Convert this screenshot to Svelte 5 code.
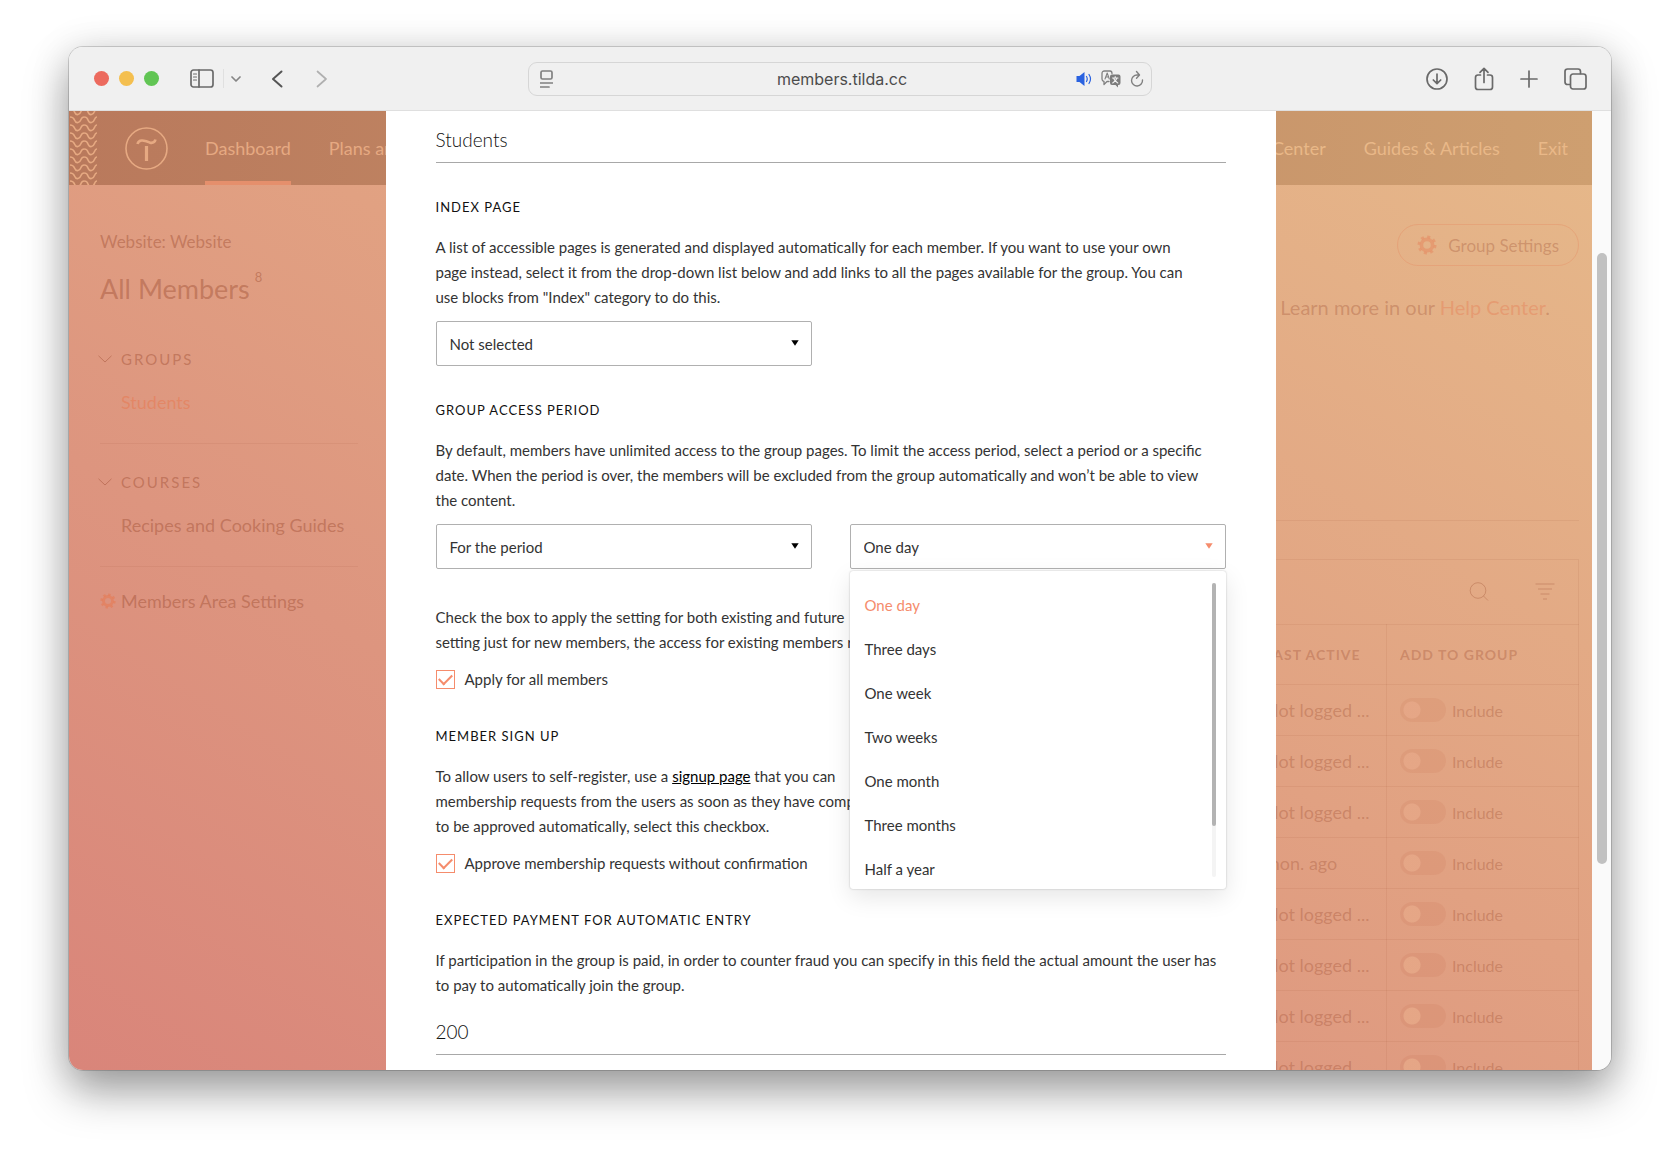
<script lang="ts">
  interface Row {
    id: number;
    lastActive: string;
  }

  const periods = [
    'One day',
    'Three days',
    'One week',
    'Two weeks',
    'One month',
    'Three months',
    'Half a year',
    'One year'
  ];

  const rows: Row[] = [
    'Not logged ...',
    'Not logged ...',
    'Not logged ...',
    'mon. ago',
    'Not logged ...',
    'Not logged ...',
    'Not logged ...',
    'Not logged ...'
  ].map((lastActive, id) => ({ id, lastActive }));

  const waves = Array.from({ length: 11 }, (_, i) => i * 8 - 4);

  let groupName = $state('Students');
  let indexPage = $state('Not selected');
  let access = $state('For the period');
  let period = $state('One day');
  let periodOpen = $state(true);
  let applyAll = $state(true);
  let autoApprove = $state(true);
  let payment = $state('200');

  function choose(p: string) {
    period = p;
    periodOpen = false;
  }
</script>

{#snippet gear()}
  <svg class="gear" viewBox="0 0 20 20" aria-hidden="true">
    <circle cx="10" cy="10" r="5.6" stroke-width="3.6" />
    <circle cx="10" cy="10" r="8.2" stroke-width="2.6" stroke-dasharray="3 3.44" />
  </svg>
{/snippet}

{#snippet chevron()}
  <svg class="chevron" viewBox="0 0 14 8" aria-hidden="true"><path d="M.5.8 7 7 13.500.8" /></svg>
{/snippet}

{#snippet arrow()}
  <svg class="arrow" viewBox="0 0 8 6" aria-hidden="true"><path d="M.3.3h7.400L4 5.700z" /></svg>
{/snippet}

<div class="desktop">
  <div class="window">
    <header class="toolbar">
      <div class="tools left">
        <div class="lights">
          <button class="light red" aria-label="Close"></button>
          <button class="light yellow" aria-label="Minimize"></button>
          <button class="light green" aria-label="Zoom"></button>
        </div>
        <button class="tool sidebar-btn" aria-label="Show sidebar">
          <svg width="24" height="19" viewBox="0 0 24 19">
            <rect x="1" y="1" width="22" height="17" rx="2.500" />
            <path d="M9 1v17" />
            <path d="M3.500 5h3M3.500 8h3M3.500 11h3" stroke-width="1.200" />
          </svg>
        </button>
        <button class="tool small" aria-label="Tab groups">
          <svg width="10" height="6" viewBox="0 0 10 6"><path d="M1 1l4 4 4-4" /></svg>
        </button>
        <button class="tool back" aria-label="Back">
          <svg width="12" height="18" viewBox="0 0 12 18"><path d="M10.500 1.500 2 9l8.500 7.500" stroke-width="2" /></svg>
        </button>
        <button class="tool forward" aria-label="Forward">
          <svg width="12" height="18" viewBox="0 0 12 18"><path d="M1.500 1.500 10 9l-8.500 7.500" /></svg>
        </button>
      </div>

      <div class="address">
        <button class="tool" aria-label="Reader">
          <svg width="13" height="18" viewBox="0 0 13 18">
            <rect x="1" y="1" width="11" height="8" rx="1.500" />
            <path d="M.5 13h12M.5 17h8.500" />
          </svg>
        </button>
        <input type="text" value="members.tilda.cc" aria-label="Address" />
        <div class="address-icons">
          <button class="tool" aria-label="Mute tab">
            <svg width="16" height="16" viewBox="0 0 16 16">
              <path class="speaker" d="M.5 5h3L8.500 1v14l-5-4h-3z" />
              <path class="sound" d="M10.500 5.500q1.500 2.500 0 5M13 3.500q3 4.500 0 9" />
            </svg>
          </button>
          <button class="tool" aria-label="Translate">
            <svg width="20" height="18" viewBox="0 0 20 18">
              <path d="M8 11.500H6L3 14.500v-3Q1 11 1 9V3.500Q1 1 3.500 1H9q2 0 2 2.500" stroke-width="1.300" />
              <path d="M4 9l2.200-6L8.300 9M4.700 7h3" stroke-width="1.100" />
              <path class="solid" d="M11 4.500h6.500q2 0 2 2V13q0 2-2 2H17v2.500L14.500 15H11q-2 0-2-2V6.500q0-2 2-2z" />
              <path class="light-stroke" d="M11.500 8h5.500M14.200 6.500V8M16 8q-1 3-4.300 5M12.500 8q1 3.200 4.300 5" />
            </svg>
          </button>
          <button class="tool" aria-label="Reload">
            <svg width="14" height="18" viewBox="0 0 14 18">
              <path d="M12.500 10A5.500 5.500 0 1 1 7 5h2M6.500 1.500 9.500 5 6.500 8.200" stroke-width="1.400" />
            </svg>
          </button>
        </div>
      </div>

      <div class="tools right">
        <button class="tool" aria-label="Downloads">
          <svg width="22" height="22" viewBox="0 0 22 22">
            <circle cx="11" cy="11" r="10" /><path d="M11 6v9.500M7.300 12l3.700 3.700 3.700-3.700" />
          </svg>
        </button>
        <button class="tool" aria-label="Share">
          <svg width="20" height="24" viewBox="0 0 20 24">
            <path d="M6.500 8H4Q1.500 8 1.500 10.500v9.500Q1.500 22.500 4 22.500h12q2.500 0 2.500-2.500v-9.500Q18.500 8 16 8h-2.500M10 15.500V1.500M6 5.300l4-4 4 4" />
          </svg>
        </button>
        <button class="tool" aria-label="New tab">
          <svg width="18" height="18" viewBox="0 0 18 18"><path d="M9 1v16M1 9h16" /></svg>
        </button>
        <button class="tool" aria-label="Tab overview">
          <svg width="24" height="22" viewBox="0 0 24 22">
            <path d="M6 16.500H3.500Q1 16.500 1 14V3.500Q1 1 3.500 1H14q2.500 0 2.500 2.500v2" />
            <rect x="6.500" y="6" width="15.500" height="15" rx="2.500" />
          </svg>
        </button>
      </div>
    </header>

    <div class="viewport">
      <div class="page">
        <div class="site-header">
          <svg class="waves" width="28" height="74" viewBox="0 0 28 74" aria-hidden="true">
            {#each waves as y}
              <path d="M1 {y + 2}q3.400 0 4.500 3t3.500 2.500q2-.3 3-3t3.500-2.500q2.500 0 3.500 3t3.500 2.500q2-.3 3-3t2.500-2.500" />
            {/each}
          </svg>
          <a class="logo" href="#home" aria-label="Tilda">
            <svg width="43" height="43" viewBox="0 0 43 43">
              <circle cx="21.500" cy="21.500" r="20.500" stroke-width="1.600" />
              <path d="M12.500 17q1-4 5-3.500t7.500 2.200q4.500.8 5.500-3.200" stroke-width="2.600" />
              <path d="M21.500 19v15" stroke-width="3.200" />
            </svg>
          </a>
          <nav class="main-nav">
            <a class="active" href="#dashboard">Dashboard</a>
            <a href="#plans">Plans and Billing</a>
          </nav>
          <nav class="side-nav">
            <a href="#help">Help Center</a>
            <a href="#guides">Guides &amp; Articles</a>
            <a href="#exit">Exit</a>
          </nav>
        </div>

        <div class="columns">
          <aside>
            <p class="site">Website: Website</p>
            <h1>All Members<sup>8</sup></h1>
            <section>
              <h2>{@render chevron()}GROUPS</h2>
              <a class="current" href="#students">Students</a>
            </section>
            <section>
              <h2>{@render chevron()}COURSES</h2>
              <a href="#recipes">Recipes and Cooking Guides</a>
            </section>
            <a class="settings" href="#settings">{@render gear()}Members Area Settings</a>
          </aside>

          <main>
            <button class="group-settings">{@render gear()}Group Settings</button>
            <p class="learn">. Learn more in our <a href="#help-center">Help Center</a>.</p>
            <div class="members">
              <div class="members-bar">
                <button aria-label="Search">
                  <svg width="20" height="20" viewBox="0 0 20 20"><circle cx="9" cy="8.500" r="7.800" /><path d="M14.500 14l4.500 4.500" /></svg>
                </button>
                <button aria-label="Filter">
                  <svg width="20" height="20" viewBox="0 0 20 20"><path d="M.5 2h19M3 7h14M5.500 12h9M8 17h4" /></svg>
                </button>
              </div>
              <table>
                <thead>
                  <tr><th>LAST ACTIVE</th><th>ADD TO GROUP</th></tr>
                </thead>
                <tbody>
                  {#each rows as row (row.id)}
                    <tr>
                      <td>{row.lastActive}</td>
                      <td>
                        <label class="toggle"><input type="checkbox" />Include</label>
                      </td>
                    </tr>
                  {/each}
                </tbody>
              </table>
            </div>
          </main>
        </div>

        <div class="modal" role="dialog" aria-label="Group Settings">
          <input class="line-input" type="text" bind:value={groupName} aria-label="Group name" />

          <h3 id="index-page">INDEX PAGE</h3>
          <p>
            A list of accessible pages is generated and displayed automatically for each member. If you want to use your own<br />
            page instead, select it from the drop-down list below and add links to all the pages available for the group. You can<br />
            use blocks from "Index" category to do this.
          </p>
          <div class="fields">
            <div class="select">
              <select bind:value={indexPage} aria-labelledby="index-page">
                <option>Not selected</option>
              </select>
              {@render arrow()}
            </div>
          </div>

          <h3 id="access-period">GROUP ACCESS PERIOD</h3>
          <p>
            By default, members have unlimited access to the group pages. To limit the access period, select a period or a specific<br />
            date. When the period is over, the members will be excluded from the group automatically and won’t be able to view<br />
            the content.
          </p>
          <div class="fields">
            <div class="select">
              <select bind:value={access} aria-labelledby="access-period">
                <option>For the period</option>
              </select>
              {@render arrow()}
            </div>
            <div class="select" class:open={periodOpen}>
              <select bind:value={period} aria-label="Period">
                {#each periods as p}
                  <option>{p}</option>
                {/each}
              </select>
              {@render arrow()}
              {#if periodOpen}
                <div class="menu">
                  <div class="options">
                    {#each periods as p}
                      <button class:chosen={p === period} onclick={() => choose(p)}>{p}</button>
                    {/each}
                  </div>
                  <div class="menu-track"><div class="menu-thumb"></div></div>
                </div>
              {/if}
            </div>
          </div>

          <p class="note">
            Check the box to apply the setting for both existing and future<br />
            setting just for new members, the access for existing members re
          </p>
          <label class="check"><input type="checkbox" bind:checked={applyAll} />Apply for all members</label>

          <h3>MEMBER SIGN UP</h3>
          <p>
            To allow users to self-register, use a <a href="#signup">signup page</a> that you can<br />
            membership requests from the users as soon as they have comp<br />
            to be approved automatically, select this checkbox.
          </p>
          <label class="check"><input type="checkbox" bind:checked={autoApprove} />Approve membership requests without confirmation</label>

          <h3>EXPECTED PAYMENT FOR AUTOMATIC ENTRY</h3>
          <p>
            If participation in the group is paid, in order to counter fraud you can specify in this field the actual amount the user has<br />
            to pay to automatically join the group.
          </p>
          <input class="line-input amount" type="text" bind:value={payment} aria-label="Expected payment" />
        </div>
      </div>
      <div class="scrollbar"><div class="thumb"></div></div>
    </div>
  </div>
</div>

<style>
  :global(body) {
    background: #fff;
  }

  .desktop {
    --accent: #f58c6c;
    --dim: rgba(150, 68, 40, 0.4);
    --dim-accent: rgba(232, 120, 80, 0.55);
    --hair: rgba(160, 80, 50, 0.1);
    box-sizing: border-box;
    height: 100vh;
    padding: 47px 69px 91px;
    overflow: hidden;
    font-family: Lato, sans-serif;
    color: #333;
  }

  .desktop * {
    box-sizing: border-box;
  }

  .window {
    height: 100%;
    display: flex;
    flex-direction: column;
    border-radius: 14px;
    overflow: hidden;
    background: #fff;
    box-shadow:
      0 0 0 1px rgba(0, 0, 0, 0.16),
      0 22px 44px rgba(0, 0, 0, 0.34),
      0 4px 40px rgba(0, 0, 0, 0.14);
  }

  button {
    background: none;
    border: none;
    padding: 0;
    font: inherit;
    color: inherit;
    cursor: pointer;
  }

  svg {
    display: block;
    flex-shrink: 0;
    fill: none;
    stroke: currentColor;
  }

  p,
  h1,
  h2,
  h3 {
    margin: 0;
    font-weight: 400;
  }

  a {
    color: inherit;
    text-decoration: none;
  }

  /* browser toolbar */
  .toolbar {
    flex: 0 0 64px;
    display: grid;
    grid-template-columns: 1fr minmax(300px, 624px) 1fr;
    align-items: center;
    background: #f0f0f0;
    border-bottom: 1px solid #dfdfdf;
    color: #6a6a6a;
  }

  .tools {
    display: flex;
    align-items: center;
  }

  .left {
    padding-left: 25px;
  }

  .right {
    justify-content: flex-end;
    gap: 26px;
    padding-right: 23px;
  }

  .lights {
    display: flex;
    gap: 10px;
  }

  .light {
    width: 15px;
    height: 15px;
    border-radius: 50%;
  }

  .red {
    background: #ec6a5e;
  }

  .yellow {
    background: #f4bf4f;
  }

  .green {
    background: #61c554;
  }

  .tool svg {
    stroke-width: 1.7;
    stroke-linecap: round;
    stroke-linejoin: round;
  }

  .sidebar-btn {
    margin-left: 31px;
    padding-right: 9px;
    border-right: 1px solid #e0e0e0;
  }

  .small {
    margin-left: 7px;
    color: #858585;
  }

  .back {
    margin-left: 30px;
    color: #555;
  }

  .forward {
    margin-left: 33px;
    color: #b0b0b0;
  }

  .address {
    display: grid;
    grid-template-columns: 72px 1fr 72px;
    align-items: center;
    justify-items: start;
    height: 34px;
    padding: 0 7px 0 11px;
    border: 1px solid #d6d6d6;
    border-radius: 9px;
    color: #808080;
  }

  .address input {
    width: 100%;
    border: none;
    background: none;
    padding: 0;
    text-align: center;
    font: 16px Inter, sans-serif;
    color: #4c4c4c;
  }

  .address-icons {
    display: flex;
    justify-self: end;
    align-items: center;
    gap: 9px;
  }

  .speaker {
    fill: #2a62e0;
    stroke: none;
  }

  .sound {
    stroke: #2a62e0;
    stroke-width: 1.2;
  }

  .solid {
    fill: #7c7c7c;
    stroke: none;
  }

  .light-stroke {
    stroke: #f0f0f0;
    stroke-width: 1.1;
  }

  /* page behind the dialog */
  .viewport {
    flex: 1;
    min-height: 0;
    display: flex;
  }

  .page {
    position: relative;
    flex: 1;
    min-width: 0;
    overflow: hidden;
    background: linear-gradient(to top right, #d9857a, #dd957f 32%, #e1a182 55%, #e6b98a);
  }

  .scrollbar {
    width: 19px;
    padding: 142px 4px 0 5px;
    background: #fafafa;
  }

  .thumb {
    height: 611px;
    width: 10px;
    border-radius: 5px;
    background: #c1c1c1;
  }

  .site-header {
    display: flex;
    align-items: center;
    height: 74px;
    background: linear-gradient(to right, #b9795c, #ce9f70);
    font-size: 18px;
    color: #e6a982;
  }

  .waves {
    stroke-width: 1.6;
  }

  .logo {
    margin: 0 37px 0 28px;
  }

  .main-nav,
  .side-nav {
    display: flex;
    gap: 38px;
    height: 100%;
    line-height: 74px;
    white-space: nowrap;
  }

  .side-nav {
    margin-left: auto;
    padding-right: 24px;
    color: #e9b888;
  }

  .active {
    border-bottom: 4px solid #e58f6c;
  }

  .columns {
    display: flex;
    justify-content: space-between;
    color: var(--dim);
    font-size: 18px;
  }

  aside {
    width: 289px;
    padding: 45px 0 0 31px;
    line-height: 24px;
  }

  .site {
    font-size: 17px;
  }

  h1 {
    display: flex;
    margin: 17px 0 40px;
    font-size: 27px;
    line-height: 36px;
  }

  sup {
    margin-left: 5px;
    font-size: 13px;
    line-height: 12px;
  }

  aside section {
    padding-bottom: 29px;
    margin-bottom: 26px;
    border-bottom: 1px solid var(--hair);
  }

  aside section a {
    display: block;
    padding-left: 21px;
    white-space: nowrap;
  }

  aside h2 {
    display: flex;
    align-items: center;
    gap: 9px;
    margin: 0 0 19px -2px;
    font-size: 15px;
    line-height: 24px;
    letter-spacing: 2px;
  }

  .chevron {
    width: 14px;
    height: 8px;
  }

  .current,
  .learn a {
    color: var(--dim-accent);
  }

  .settings {
    display: flex;
    align-items: center;
    gap: 5px;
    margin-top: -4px;
  }

  .gear {
    width: 16px;
    height: 16px;
    color: var(--dim-accent);
  }

  main {
    display: flex;
    flex-direction: column;
    align-items: flex-end;
    padding: 39px 13px 0 0;
    white-space: nowrap;
    color: rgba(150, 68, 40, 0.3);
  }

  .group-settings {
    display: flex;
    align-items: center;
    gap: 11px;
    height: 42px;
    padding: 0 19px;
    border: 1px solid rgba(232, 120, 80, 0.25);
    border-radius: 21px;
    font-size: 17px;
  }

  .group-settings .gear {
    width: 20px;
    height: 20px;
  }

  .group-settings .gear,
  .learn a {
    opacity: 0.7;
  }

  .learn {
    margin: 29px 29px 0 0;
    font-size: 20px;
    line-height: 24px;
  }

  .members {
    width: 333px;
    margin-top: 201px;
    padding-top: 38px;
    border-top: 1px solid var(--hair);
  }

  .members-bar {
    display: flex;
    justify-content: flex-end;
    align-items: center;
    gap: 46px;
    height: 65px;
    padding-right: 23px;
    border: 1px solid var(--hair);
    border-bottom: none;
  }

  table {
    width: 100%;
    border-collapse: collapse;
    table-layout: fixed;
  }

  th,
  td {
    height: 51px;
    padding: 0 13px;
    border: 1px solid var(--hair);
    text-align: left;
  }

  th {
    height: 60px;
    font-size: 14px;
    font-weight: 700;
    letter-spacing: 1px;
  }

  th:first-child {
    width: 140px;
  }

  th:first-child,
  td:first-child {
    padding: 0 0 0 18px;
  }

  td {
    font-size: 18px;
  }

  .toggle {
    display: flex;
    align-items: center;
    gap: 6px;
    font-size: 16px;
  }

  .toggle input {
    appearance: none;
    width: 46px;
    height: 24px;
    margin: 0;
    border-radius: 12px;
    background:
      radial-gradient(circle at 12px 12px, rgba(230, 168, 136, 0.9) 8px, transparent 9px),
      rgba(190, 90, 60, 0.1);
  }

  /* dialog over the page */
  .modal {
    position: absolute;
    inset: 0;
    width: 890px;
    max-width: 100%;
    margin: 0 auto;
    padding: 0 50px;
    overflow: hidden;
    background: #fff;
    font-size: 15px;
    line-height: 25px;
    white-space: nowrap;
  }

  .line-input {
    display: block;
    width: 100%;
    height: 52px;
    padding: 5px 0 0;
    border: none;
    border-bottom: 1px solid #a8a8a8;
    background: none;
    font: 300 19px Lato, sans-serif;
    color: #111;
    outline: none;
  }

  .amount {
    margin-top: 5px;
  }

  h3 {
    margin: 34px 0 18px;
    font-size: 13px;
    line-height: 20px;
    letter-spacing: 1px;
    color: #111;
  }

  .modal p a {
    color: #000;
    text-decoration: underline;
  }

  .fields {
    display: grid;
    grid-template-columns: 1fr 1fr;
    gap: 38px;
    margin-top: 11px;
  }

  .select {
    position: relative;
    height: 45px;
  }

  select {
    appearance: none;
    width: 100%;
    height: 100%;
    padding: 0 13px;
    border: 1px solid #b0b0b0;
    border-radius: 2px;
    background: #fff;
    font: 15px Lato, sans-serif;
    color: #333;
  }

  .arrow {
    position: absolute;
    top: 19px;
    right: 13px;
    width: 8px;
    height: 6px;
    fill: #000;
    stroke: none;
    pointer-events: none;
  }

  .open .arrow {
    fill: var(--accent);
  }

  .menu {
    position: absolute;
    top: 100%;
    left: 0;
    right: 0;
    z-index: 1;
    display: flex;
    margin-top: 2px;
    height: 318px;
    padding: 12px 10px 12px 0;
    border-radius: 3px;
    background: #fff;
    box-shadow:
      0 0 2px rgba(0, 0, 0, 0.25),
      0 8px 24px rgba(0, 0, 0, 0.1);
  }

  .options {
    flex: 1;
    overflow: hidden;
  }

  .options button {
    display: block;
    width: 100%;
    height: 44px;
    padding: 0 15px;
    text-align: left;
    font-size: 15px;
  }

  .options .chosen {
    color: var(--accent);
  }

  .menu-track {
    width: 4px;
    border-radius: 2px;
    background: #f4f4f4;
  }

  .menu-thumb {
    height: 243px;
    border-radius: 2px;
    background: #b3b3b3;
  }

  .note {
    margin-top: 36px;
  }

  .check {
    display: flex;
    align-items: center;
    gap: 10px;
    margin-top: 12px;
  }

  .check input {
    appearance: none;
    width: 19px;
    height: 19px;
    margin: 0;
    border: 1px solid var(--accent);
    display: grid;
    place-items: center;
  }

  .check input:checked::before {
    content: '';
    width: 11px;
    height: 6px;
    margin-bottom: 3px;
    border: solid var(--accent);
    border-width: 0 0 2px 2px;
    transform: rotate(-45deg);
  }
</style>
